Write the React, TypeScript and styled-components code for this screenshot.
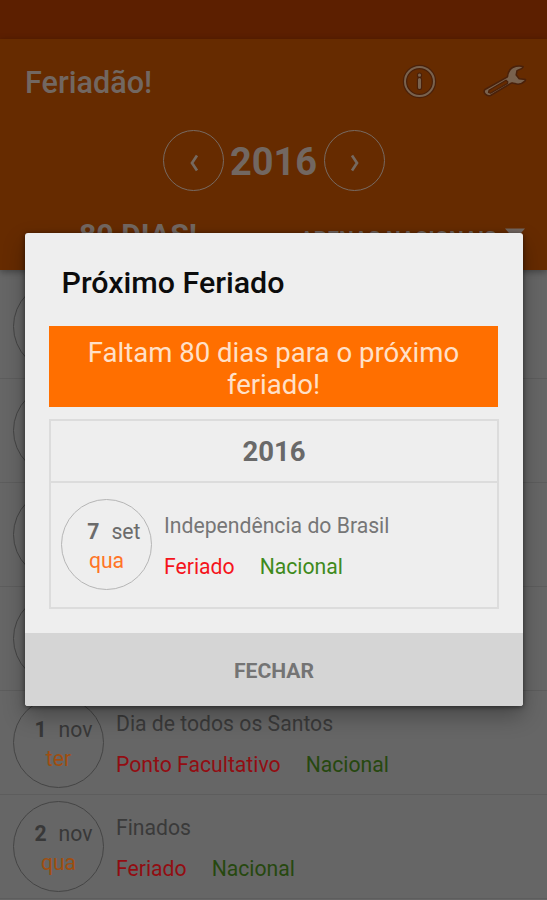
import React from "react";
import styled, { createGlobalStyle } from "styled-components";

const GlobalStyle = createGlobalStyle`
  *, *::before, *::after { box-sizing: border-box; }
  body { margin: 0; overflow: hidden; background: #666; font-family: Roboto, "Noto Sans", sans-serif; }
`;

const Screen = styled.div`
  display: grid;
  grid-template: 900px / 547px;
  width: 547px;
  height: 900px;
  overflow: hidden;
`;

const Page = styled.div`
  grid-area: 1 / 1;
  display: flex;
  flex-direction: column;
  overflow: hidden;
  background: #666;
`;

const StatusBar = styled.div`
  flex: none;
  height: 39px;
  background: #5c1f00;
`;

const Header = styled.header`
  flex: none;
  display: flex;
  flex-direction: column;
  height: 231px;
  background: #662b00;
  box-shadow: 0 2px 7px rgba(0, 0, 0, 0.35);
  color: #726761;
`;

const TitleBar = styled.div`
  display: flex;
  align-items: center;
  height: 86px;
  padding: 0 20px 0 25px;
`;

const AppTitle = styled.h1`
  margin: 1px auto 0 0;
  font-size: 30.6px;
  line-height: 36px;
  font-weight: 500;
`;

const IconButton = styled.button<{ $gap?: number }>`
  display: flex;
  padding: 0;
  border: 0;
  background: none;
  margin-left: ${(p) => p.$gap ?? 0}px;
`;

const YearPicker = styled.div`
  display: flex;
  align-items: center;
  justify-content: center;
  height: 70px;
`;

const RoundButton = styled.button`
  display: flex;
  align-items: center;
  justify-content: center;
  width: 61px;
  height: 61px;
  padding: 6px 0 0 1px;
  border: 1.5px solid #776a62;
  border-radius: 50%;
  background: none;
  color: inherit;
`;

const Year = styled.span`
  width: 100px;
  padding-top: 3px;
  text-align: center;
  font-size: 38px;
  line-height: 44px;
  font-weight: 700;
`;

const Summary = styled.div`
  display: flex;
  justify-content: space-between;
  padding: 23px 22px 0 79px;
  white-space: nowrap;
`;

const Countdown = styled.span`
  font-size: 30.2px;
  line-height: 34px;
  font-weight: 700;
`;

const Filter = styled.span`
  display: flex;
  align-items: flex-start;
  gap: 8px;
  padding-top: 8px;
  font-size: 20.9px;
  line-height: 27px;
  font-weight: 700;
`;

const List = styled.ul`
  margin: 0;
  padding: 5px 0 0;
  list-style: none;
`;

const HolidayItem = styled.li<{ $inDialog?: boolean }>`
  display: flex;
  align-items: flex-start;
  gap: 12px;
  height: ${(p) => (p.$inDialog ? 125 : 104)}px;
  padding: ${(p) => (p.$inDialog ? "16px 0 0 10px" : "6px 0 0 13px")};
  border-bottom: ${(p) => (p.$inDialog ? "0" : "1px solid #5d5d5d")};
`;

const DateBadge = styled.div<{ $inDialog?: boolean }>`
  flex: none;
  width: 91px;
  height: 91px;
  padding-top: 17px;
  border: 1.5px solid ${(p) => (p.$inDialog ? "#b5b5b5" : "#454545")};
  border-radius: 50%;
  color: ${(p) => (p.$inDialog ? "#6b6b6b" : "#383838")};
  font-size: 21.2px;
  line-height: 29px;
`;

const DayLine = styled.div`
  display: flex;
  justify-content: flex-end;
  gap: 12px;
  padding-right: 10.5px;
  white-space: nowrap;
`;

const Weekday = styled.div<{ $inDialog?: boolean }>`
  text-align: center;
  color: ${(p) => (p.$inDialog ? "#ff7426" : "#a04e10")};
`;

const Details = styled.div<{ $inDialog?: boolean }>`
  padding-top: 13px;
  color: ${(p) => (p.$inDialog ? "#767676" : "#3a3a3a")};
  font-size: 21.2px;
  line-height: 28px;
  white-space: nowrap;
`;

const Tags = styled.div`
  display: flex;
  gap: 25px;
  margin-top: 13px;
`;

const Kind = styled.span<{ $inDialog?: boolean }>`
  color: ${(p) => (p.$inDialog ? "#f5141c" : "#920d12")};
`;

const Scope = styled.span<{ $inDialog?: boolean }>`
  color: ${(p) => (p.$inDialog ? "#3f8a1c" : "#26480f")};
`;

const Overlay = styled.div`
  grid-area: 1 / 1;
  z-index: 1;
  padding: 233px 24px 0 25px;
`;

const Dialog = styled.section`
  display: flex;
  flex-direction: column;
  height: 473px;
  overflow: hidden;
  border-radius: 3px;
  background: #eee;
  box-shadow: 0 10px 22px rgba(0, 0, 0, 0.3), 0 1px 5px rgba(0, 0, 0, 0.5);
`;

const DialogTitle = styled.h2`
  margin: 0;
  padding: 31px 36.5px 0;
  height: 93px;
  font-size: 30.4px;
  line-height: 37px;
  font-weight: 500;
  color: #0c0c0c;
`;

const Banner = styled.p`
  margin: 0 25px 0 24px;
  height: 81px;
  padding: 11px 30px 0;
  background: #ff6f00;
  color: #ffe0c8;
  font-size: 27.55px;
  line-height: 32px;
  text-align: center;
`;

const Card = styled.div`
  margin: 12px 24px 0;
  height: 190px;
  border: 2px solid #dcdcdc;
`;

const CardYear = styled.div`
  height: 62px;
  border-bottom: 2px solid #dcdcdc;
  color: #696969;
  font-size: 27.5px;
  line-height: 62px;
  font-weight: 700;
  text-align: center;
`;

const CloseButton = styled.button`
  height: 73px;
  margin-top: auto;
  padding: 2px 0 0;
  border: 0;
  background: #d5d5d5;
  color: #747474;
  font: 700 21.1px/26px Roboto, sans-serif;
`;

type HolidayProps = {
  day: string;
  month: string;
  weekday: string;
  name: string;
  kind: string;
  inDialog?: boolean;
};

const Holiday = ({ day, month, weekday, name, kind, inDialog }: HolidayProps) => (
  <HolidayItem as={inDialog ? "div" : "li"} $inDialog={inDialog}>
    <DateBadge $inDialog={inDialog}>
      {day && (
        <>
          <DayLine><b>{day}</b><span>{month}</span></DayLine>
          <Weekday $inDialog={inDialog}>{weekday}</Weekday>
        </>
      )}
    </DateBadge>
    {name && (
      <Details $inDialog={inDialog}>
        <div>{name}</div>
        <Tags>
          <Kind $inDialog={inDialog}>{kind}</Kind>
          <Scope $inDialog={inDialog}>Nacional</Scope>
        </Tags>
      </Details>
    )}
  </HolidayItem>
);

const covered = { day: "", month: "", weekday: "", name: "", kind: "" };
const holidays: HolidayProps[] = [
  covered,
  covered,
  covered,
  covered,
  { day: "1", month: "nov", weekday: "ter", name: "Dia de todos os Santos", kind: "Ponto Facultativo" },
  { day: "2", month: "nov", weekday: "qua", name: "Finados", kind: "Feriado" },
];

const InfoIcon = () => (
  <svg width="36" height="36" viewBox="0 0 36 36" fill="none">
    <circle cx="18.500" cy="17.500" r="14.500" stroke="#4a210a" strokeWidth="4.400" />
    <circle cx="18.500" cy="17.500" r="14.500" stroke="#79624e" strokeWidth="2" />
    <path d="M18.500 11v.4M18.500 15.500v8" stroke="#4a210a" strokeWidth="5.200" strokeLinecap="round" />
    <path d="M18.500 11v.2M18.500 15.500v8" stroke="#79624e" strokeWidth="3" strokeLinecap="round" />
  </svg>
);

const WrenchIcon = () => (
  <svg width="46" height="36" viewBox="0 0 46 36" fill="none">
    <path
      d="M4 25.500 26.500 12.800C27 7.500 30 3.200 35 2.200c2.500-.4 5.500-.3 7.200.5l-1.200 1.700-5 2.200-.8 4.400 3 3.800 6.300.8-.6 1.500c-3 2.900-7 3.600-10 2.400-1.500-.5-2.600-.9-3.700-.4L9.500 31.500C5.500 33 1.500 28.300 4 25.500Z"
      fill="#79624e" stroke="#4a210a" strokeWidth="1.500" strokeLinejoin="round"
    />
    <path d="M8 26.300 25 16.300l1.800 1.500-.3 1.700L9.500 29.200l-2-.7Z" fill="#662b00" stroke="#4a210a" strokeWidth="1.200" strokeLinejoin="round" />
  </svg>
);

const Chevron = ({ next }: { next?: boolean }) => (
  <svg width="12" height="18" viewBox="0 0 12 18" fill="none">
    <path d={next ? "M3 1.500 8 9l-5 7.500" : "M9 1.500 4 9l5 7.500"} stroke="#76695f" strokeWidth="2.700" />
  </svg>
);

export default function App() {
  return (
    <>
      <GlobalStyle />
      <Screen>
        <Page>
          <StatusBar />
          <Header>
            <TitleBar>
              <AppTitle>Feriadão!</AppTitle>
              <IconButton aria-label="Info"><InfoIcon /></IconButton>
              <IconButton aria-label="Configurar" $gap={44}><WrenchIcon /></IconButton>
            </TitleBar>
            <YearPicker>
              <RoundButton><Chevron /></RoundButton>
              <Year>2016</Year>
              <RoundButton><Chevron next /></RoundButton>
            </YearPicker>
            <Summary>
              <Countdown>80 DIAS!</Countdown>
              <Filter>
                APENAS NACIONAIS
                <svg width="20" height="18" viewBox="0 0 20 18"><path d="M0 2.500h20L10 14Z" fill="#726761" /></svg>
              </Filter>
            </Summary>
          </Header>
          <List>
            {holidays.map((h, i) => <Holiday key={i} {...h} />)}
          </List>
        </Page>
        <Overlay>
          <Dialog role="dialog">
            <DialogTitle>Próximo Feriado</DialogTitle>
            <Banner>Faltam 80 dias para o próximo feriado!</Banner>
            <Card>
              <CardYear>2016</CardYear>
              <Holiday inDialog day="7" month="set" weekday="qua" name="Independência do Brasil" kind="Feriado" />
            </Card>
            <CloseButton>FECHAR</CloseButton>
          </Dialog>
        </Overlay>
      </Screen>
    </>
  );
}
